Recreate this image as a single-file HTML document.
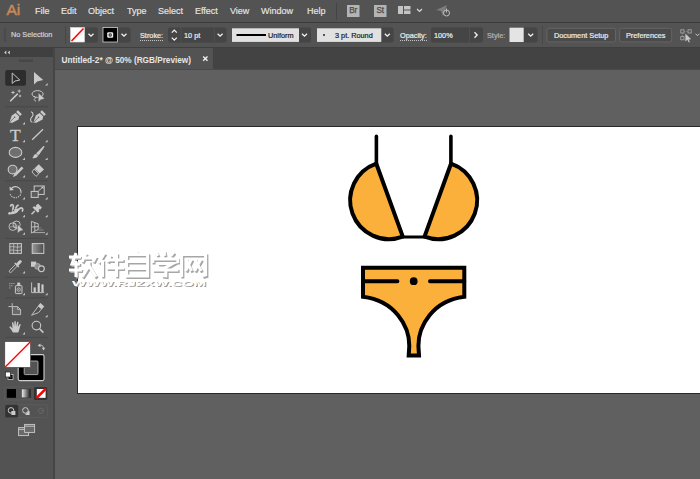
<!DOCTYPE html>
<html><head><meta charset="utf-8">
<style>
*{margin:0;padding:0;box-sizing:border-box}
html,body{width:700px;height:479px;overflow:hidden;background:#606060;font-family:"Liberation Sans",sans-serif;}
#app{position:relative;width:700px;height:479px;overflow:hidden;background:#606060}
.abs{position:absolute}
#menubar{left:0;top:0;width:700px;height:22px;background:#535353}
#menuline{left:0;top:22px;width:700px;height:1px;background:#3c3c3c}
#ctrl{left:0;top:23px;width:700px;height:24px;background:#535353}
#ctrlline{left:0;top:47px;width:700px;height:1px;background:#3f3f3f}
#tabbar{left:54px;top:48px;width:646px;height:22px;background:#434343}
#tab{left:55px;top:48px;width:157.6px;height:21.5px;background:#535353}
#tabline{left:55px;top:69.3px;width:646px;height:1px;background:#4a4a4a}
#tools{left:0;top:48px;width:52.5px;height:431px;background:#535353}
#toolsborder{left:52.5px;top:48px;width:2.5px;height:431px;background:#464646}
#toolshead{left:0;top:48px;width:52.5px;height:8.5px;background:#404040}
.m{position:absolute;top:5px;font-size:9px;color:#e6e6e6;-webkit-text-stroke:0.15px #e6e6e6;white-space:nowrap;line-height:12px}
.c{position:absolute;font-size:7.3px;color:#ececec;-webkit-text-stroke:0.2px #ececec;white-space:nowrap;line-height:10px}
#artboard{left:77px;top:126px;width:640px;height:268px;background:#fff;border:1px solid #2a2a2a}
</style></head><body>
<div id="app">
<div class="abs" id="menubar"></div>
<div class="abs" id="menuline"></div>
<div class="abs" id="ctrl"></div>
<div class="abs" id="ctrlline"></div>
<div class="abs" id="tabbar"></div>
<div class="abs" id="tab"></div>
<div class="abs" id="tabline"></div>
<div class="abs" id="tools"></div>
<div class="abs" id="toolshead"></div>
<div class="abs" id="toolsborder"></div>


<!-- control bar widgets -->
<svg class="abs" style="left:0;top:0" width="700" height="479" viewBox="0 0 700 479">
<!-- separators -->
<rect x="336" y="3" width="1" height="17" fill="#444"/>
<!-- Br St -->
<rect x="347" y="5" width="12.5" height="12" fill="#b4b4b4"/>
<rect x="374" y="5" width="12.5" height="12" fill="#b4b4b4"/>
<!-- layout icon -->
<rect x="398" y="6" width="5" height="8" fill="#c4c4c4"/>
<rect x="404" y="6" width="6.5" height="3.5" fill="#c4c4c4"/>
<rect x="404" y="10.5" width="6.5" height="3.5" fill="#c4c4c4"/>
<path d="M417,9 L419.5,11.5 L422,9" fill="none" stroke="#ddd" stroke-width="1.1"/>
<!-- gpu icon -->
<path d="M436,10 L447,5 L443,16 L441,11 Z" fill="#7d7d7d"/>
<circle cx="446.5" cy="13" r="3" fill="none" stroke="#bdbdbd" stroke-width="1"/>
<rect x="446" y="8.5" width="1" height="4" fill="#bdbdbd"/>
<!-- grip -->
<path d="M5,28.5 V42" stroke="#454545" stroke-width="2.2" stroke-dasharray="1 1"/>
<rect x="65" y="26" width="1" height="18" fill="#474747"/>
<!-- fill swatch -->
<rect x="84" y="27.5" width="14" height="15" rx="2" fill="#454545"/>
<rect x="70.5" y="27.5" width="14" height="14.5" fill="#fff" stroke="#dcdcdc" stroke-width="0.6"/>
<path d="M71.5,41 L83.5,28.5" stroke="#f00" stroke-width="1.6"/>
<path d="M88.5,33.7 L91,36.2 L93.5,33.7" fill="none" stroke="#f2f2f2" stroke-width="1.3"/>
<!-- stroke swatch -->
<rect x="117" y="27.5" width="13.5" height="15" rx="2" fill="#454545"/>
<rect x="103" y="27.5" width="14.5" height="14.5" fill="#000" stroke="#cfcfcf" stroke-width="0.8"/>
<rect x="107.2" y="32.2" width="6" height="5.6" rx="1.2" fill="#efefef"/>
<circle cx="110.2" cy="35" r="1.7" fill="#222"/>
<circle cx="110.2" cy="35" r="0.7" fill="#ddd"/>
<path d="M121.5,33.7 L124,36.2 L126.5,33.7" fill="none" stroke="#f2f2f2" stroke-width="1.3"/>
<!-- stroke weight -->
<rect x="168" y="27.5" width="58.5" height="15" rx="2" fill="#454545"/>
<rect x="180.5" y="27.5" width="0.8" height="15" fill="#535353"/>
<rect x="213.8" y="27.5" width="0.8" height="15" fill="#535353"/>
<path d="M171.8,32.6 L174.3,30.1 L176.8,32.6 M171.8,37.6 L174.3,40.1 L176.8,37.6" fill="none" stroke="#f2f2f2" stroke-width="1.3"/>
<path d="M217.6,33.7 L220.1,36.2 L222.6,33.7" fill="none" stroke="#f2f2f2" stroke-width="1.3"/>
<!-- profile -->
<rect x="298" y="27.5" width="13" height="15" rx="2" fill="#454545"/>
<rect x="232" y="28.3" width="67" height="13.6" fill="#e1e1e1"/>
<rect x="236.5" y="34" width="29.5" height="2" fill="#000"/>
<path d="M302,33.7 L304.5,36.2 L307,33.7" fill="none" stroke="#f2f2f2" stroke-width="1.3"/>
<!-- brush -->
<rect x="380" y="27.5" width="13.6" height="15" rx="2" fill="#454545"/>
<rect x="317" y="28.3" width="64.3" height="13.6" fill="#e1e1e1"/>
<circle cx="324" cy="35" r="0.9" fill="#111"/>
<path d="M384.8,33.7 L387.3,36.2 L389.8,33.7" fill="none" stroke="#f2f2f2" stroke-width="1.3"/>
<!-- opacity -->
<rect x="431" y="27.5" width="52" height="15" rx="2" fill="#454545"/>
<rect x="469" y="27.5" width="0.8" height="15" fill="#535353"/>
<path d="M474.5,32.3 L477.2,35 L474.5,37.7" fill="none" stroke="#f2f2f2" stroke-width="1.3"/>
<!-- style -->
<rect x="523" y="27.5" width="14.5" height="15" rx="2" fill="#454545"/>
<rect x="509.5" y="27.7" width="14.2" height="14.3" fill="#e4e4e4"/>
<path d="M528.2,33.7 L530.7,36.2 L533.2,33.7" fill="none" stroke="#f2f2f2" stroke-width="1.3"/>
<!-- buttons -->
<rect x="547" y="28.3" width="68.5" height="13.6" rx="2" fill="#4b4b4b" stroke="#6b6b6b" stroke-width="0.8"/>
<rect x="619.7" y="28.3" width="52" height="13.6" rx="2" fill="#4b4b4b" stroke="#6b6b6b" stroke-width="0.8"/>
<!-- right icon -->
<rect x="542" y="26" width="1" height="18" fill="#474747"/>
<path d="M682.5,31.5 H689.5 M682.5,31.5 V38" stroke="#999" stroke-width="0.7" stroke-dasharray="1 0.8" fill="none"/>
<rect x="680.8" y="29.8" width="3.2" height="3.2" fill="#535353" stroke="#b0b0b0" stroke-width="0.8"/>
<rect x="688" y="29.8" width="3.2" height="3.2" fill="#535353" stroke="#b0b0b0" stroke-width="0.8"/>
<rect x="680.8" y="36.6" width="3.2" height="3.2" fill="#535353" stroke="#b0b0b0" stroke-width="0.8"/>
<path d="M685.4,33.6 L685.4,41.6 L687.4,39.8 L688.8,42.6 L689.9,42 L688.6,39.4 L691.2,39.2 Z" fill="#c8c8c8"/>
<path d="M695.5,33.7 L697.5,35.7 L699.5,33.7" fill="none" stroke="#ccc" stroke-width="1"/>
<!-- tab close -->
<path d="M203.2,56.5 L207.5,60.8 M207.5,56.5 L203.2,60.8" stroke="#f0f0f0" stroke-width="1.4"/>
<!-- toolbar head chevrons -->
<path d="M6.3,50.4 L4.2,52.5 L6.3,54.6 Z M9.8,50.4 L7.7,52.5 L9.8,54.6 Z" fill="#d0d0d0"/>
<!-- toolbar grip -->
<rect x="19" y="59.5" width="14" height="2.5" fill="#474747"/>
</svg>
<div class="abs" style="left:349.2px;top:6.3px;font-size:8.2px;line-height:10px;color:#4a4a4a;-webkit-text-stroke:0.25px #4a4a4a;letter-spacing:-0.2px">Br</div>
<div class="abs" style="left:376.4px;top:6.3px;font-size:8.2px;line-height:10px;color:#4a4a4a;-webkit-text-stroke:0.25px #4a4a4a;letter-spacing:-0.2px">St</div>


<!-- TOOLS -->
<svg class="abs" style="left:0;top:0" width="56" height="479" viewBox="0 0 56 479">
<g id="tl" fill="none" stroke="#cacaca" stroke-width="1.1">
<!-- selected box -->
<rect x="5.2" y="70" width="20.8" height="15.8" rx="2" fill="#2d2d2d" stroke="none"/>
<!-- selection -->
<path d="M12.2,73 L12.2,83.4 L15,81 L19.8,80 Z" stroke-width="0.95" stroke-linejoin="miter"/>
<!-- direct selection -->
<path d="M34,72 L34,84.6 L37.2,81.6 L43.2,80 Z" fill="#cacaca" stroke="none"/>
<path d="M45.1,85.4 L47.6,82.9 L47.6,85.4 Z" fill="#c4c4c4" stroke="none"/>
<!-- wand -->
<path d="M10.2,101.2 L17.8,93.6" stroke-width="1.5"/>
<path d="M13,90.8 v3.4 M11.3,92.5 h3.4 M19.2,89.6 v3 M17.7,91.1 h3 M20,94.8 v2.4 M18.8,96 h2.4" stroke-width="0.9"/>
<!-- lasso -->
<ellipse cx="37.6" cy="94" rx="5.6" ry="3.4" stroke-width="1"/>
<path d="M33.5,96.5 C35.5,96 36,98 34.5,99 C33.5,99.6 35,101 36,101.3" stroke-width="0.9"/>
<path d="M38.3,92.8 L38.3,102.2 L40.6,100 L44.8,98.6 Z" fill="#cacaca" stroke="#535353" stroke-width="0.5"/>
<!-- sep -->
<path d="M5,106.7 H48" stroke="#494949" stroke-width="1"/>
<!-- pen -->
<g id="pen">
<path d="M9.4,122.4 L11.8,115.4 L15.6,112.9 L19.2,116.5 L18.6,119.4 L12.4,122.8 Z" fill="#cacaca" stroke="none"/>
<path d="M16.2,112 L17.9,110.3 L21.8,114.3 L20.1,116 Z" fill="#cacaca" stroke="none"/>
<path d="M9.8,122 L14.2,117.6" stroke="#535353" stroke-width="0.7"/>
<circle cx="14.6" cy="117.2" r="0.8" fill="#535353" stroke="none"/>
</g>
<use href="#pen" x="24" y="0"/>
<path d="M31,111.8 C33.8,112.6 33.4,115.6 31.6,117.4 C30,119 30.2,121.8 32.4,122.2" stroke-width="1.1"/>
<path d="M22.5,124.6 L25.0,122.1 L25.0,124.6 Z" fill="#c4c4c4" stroke="none"/>
<!-- T -->
<!-- line -->
<path d="M32.2,139.8 L43,129.2" stroke-width="1.3"/>
<path d="M22.5,142.2 L25.0,139.7 L25.0,142.2 Z" fill="#c4c4c4" stroke="none"/>
<path d="M45.1,142.2 L47.6,139.7 L47.6,142.2 Z" fill="#c4c4c4" stroke="none"/>
<!-- ellipse -->
<ellipse cx="15.5" cy="152.4" rx="6.3" ry="5" fill="#6f6f6f" stroke-width="1.1"/>
<path d="M22.5,160.0 L25.0,157.5 L25.0,160.0 Z" fill="#c4c4c4" stroke="none"/>
<!-- brush -->
<path d="M43.6,146.2 L44.2,146.8 L38.4,155 L36.6,153.4 Z" fill="#cacaca" stroke="#cacaca" stroke-width="0.8" stroke-linejoin="round"/>
<path d="M36,154 C34.5,154.2 33.6,155.5 33.4,156.4 C33,157.4 32.4,157.8 32,158 C34.5,158.8 37.6,158 38,155.6 Z" fill="#cacaca" stroke="none"/>
<path d="M45.1,160.0 L47.6,157.5 L47.6,160.0 Z" fill="#c4c4c4" stroke="none"/>
<!-- shaper -->
<circle cx="12.6" cy="169.6" r="4.4" fill="#6f6f6f" stroke-width="1.1"/>
<path d="M22.6,167.4 L15.2,174.8" stroke-width="2.6"/>
<path d="M13,177 L14.2,173.8 L16.2,175.8 Z" fill="#cacaca" stroke="none"/>
<path d="M22.5,177.6 L25.0,175.1 L25.0,177.6 Z" fill="#c4c4c4" stroke="none"/>
<!-- eraser -->
<path d="M38.8,164.2 L44,169.4 L39.6,173.6 L34.4,168.4 Z" fill="#cacaca" stroke="none"/>
<path d="M34,169 L38.8,173.8 L36,176.4 L32,172 Z" stroke-width="0.9"/>
<path d="M45.1,177.6 L47.6,175.1 L47.6,177.6 Z" fill="#c4c4c4" stroke="none"/>
<path d="M5,180.7 H48" stroke="#494949" stroke-width="1"/>
<!-- rotate -->
<path d="M11.2,188.6 A5.6,5.6 0 0 1 21,192.2" stroke-width="1.2"/>
<path d="M21,192.2 A5.6,5.6 0 0 1 10,193.6" stroke-width="1.1" stroke-dasharray="1.3 1"/>
<path d="M9.6,186.4 L9.8,190.6 L14,190 Z" fill="#cacaca" stroke="none"/>
<path d="M22.5,199.4 L25.0,196.9 L25.0,199.4 Z" fill="#c4c4c4" stroke="none"/>
<!-- scale -->
<rect x="34.2" y="186" width="10" height="8.4" stroke-width="1"/>
<rect x="31.2" y="191.4" width="7" height="6" stroke-width="1" fill="#5d5d5d"/>
<path d="M38.4,191 L43,187" stroke-width="0.9"/>
<path d="M43.6,186.4 L43.4,189 L41,187 Z" fill="#cacaca" stroke="none"/>
<path d="M45.1,199.4 L47.6,196.9 L47.6,199.4 Z" fill="#c4c4c4" stroke="none"/>
<!-- warp/width -->
<path d="M10.6,206 C11,204.2 13.2,204.2 13.4,206.4 C13.5,208 12.4,208.6 13,210 M9.6,213.2 C12.6,213.6 15.6,213.4 17,211.6 C18.2,210 19,208.2 21,207.8 C22.8,207.6 23,209.6 22.4,211 M15.8,208 C16.4,206.6 17,205.8 18,205.2" stroke-width="1.7" stroke-linecap="round"/>
<path d="M13.2,210 C15.2,208.4 17.6,208.4 19.6,208.4 L17.4,212 C15.6,213.6 12,213.6 10.6,213 Z" fill="#cacaca" stroke="none"/>
<circle cx="9.4" cy="213.4" r="1.2" fill="#cacaca" stroke="none"/>
<circle cx="13.4" cy="210.4" r="1.1" fill="#535353" stroke="#cacaca" stroke-width="0.7"/>
<path d="M22.5,217.2 L25,214.7 L25,217.2 Z" fill="#c4c4c4" stroke="none"/>
<!-- pin -->
<path d="M35.9,205.3 L38.2,203.8 L41.9,207.5 L40.4,209.4 L38.9,209 L39.3,211.3 L37.8,212.8 L32.5,207.5 L34,206.2 L36.3,207 Z" fill="#cacaca" stroke="none"/>
<path d="M34.8,211 L31.5,214.3" stroke-width="1.5"/>
<path d="M45.1,217.2 L47.6,214.7 L47.6,217.2 Z" fill="#c4c4c4" stroke="none"/>
<!-- shape builder -->
<circle cx="12.8" cy="226.6" r="3.8" stroke-width="0.9"/>
<circle cx="16.6" cy="224.6" r="3.6" stroke-width="0.9"/>
<path d="M10,226.8 H15.6 M14.6,223 L16.4,229.4" stroke-width="0.6"/>
<path d="M17.6,224.4 L17.6,233.2 L19.8,231.2 L23.4,230 Z" fill="#cacaca" stroke="#535353" stroke-width="0.4"/>
<path d="M22.5,234.8 L25.0,232.3 L25.0,234.8 Z" fill="#c4c4c4" stroke="none"/>
<!-- perspective grid -->
<path d="M31.4,221.4 L38.2,223.8 L38.2,229.4 L31.4,233 Z M31.4,227 L38.2,226.6 M34.8,222.6 L34.8,231.2" stroke-width="0.9"/>
<path d="M38.6,227.8 H41.4" stroke="#8a8a8a" stroke-width="0.8"/>
<path d="M37.6,230 H43.6" stroke="#9a9a9a" stroke-width="0.8"/>
<path d="M33,232.6 H45" stroke="#b5b5b5" stroke-width="0.9"/>
<path d="M45.1,234.8 L47.6,232.3 L47.6,234.8 Z" fill="#c4c4c4" stroke="none"/>
<path d="M5,238.4 H48" stroke="#494949" stroke-width="1"/>
<!-- mesh -->
<rect x="9.8" y="243.6" width="11.6" height="9.8" stroke-width="1" fill="#606060"/>
<path d="M13.4,243.6 C14.6,247 12.4,250 13.8,253.4 M17.4,243.6 C18.6,247 16.2,250 17.8,253.4 M9.8,246.8 C13,245.8 17,248.2 21.4,246.6 M9.8,250.2 C13,249.2 17,251.6 21.4,250" stroke-width="0.7"/>
<!-- gradient -->
<rect x="32.2" y="243.6" width="11.6" height="9.8" stroke-width="1" fill="url(#gradtool)"/>
<!-- eyedropper -->
<path d="M15.4,264.6 L9.6,270.4 C8.6,271.6 10,273.2 11.2,272.2 L17,266.4" stroke-width="0.9"/>
<path d="M14.8,263 L18.8,267" stroke-width="1.5"/>
<path d="M17.6,264.2 L20.2,261.6" stroke-width="3" stroke-linecap="round"/>
<path d="M22.5,273.6 L25,271.1 L25,273.6 Z" fill="#c4c4c4" stroke="none"/>
<!-- blend -->
<rect x="31" y="261.6" width="5.2" height="5.2" fill="#cacaca" stroke="none"/>
<circle cx="37.6" cy="266.4" r="2.9" fill="#8a8a8a" stroke="#b8b8b8" stroke-width="0.8"/>
<circle cx="41.4" cy="268.8" r="2.9" fill="#535353" stroke-width="1.1"/>
<path d="M5,277.3 H48" stroke="#494949" stroke-width="1"/>
<!-- symbol sprayer -->
<rect x="15.4" y="285.6" width="6.6" height="8" rx="0.8" stroke-width="1" fill="#5c5c5c"/>
<rect x="17.2" y="282.6" width="3" height="2.4" fill="#cacaca" stroke="none"/>
<circle cx="18.7" cy="289.6" r="1.7" stroke-width="0.8"/>
<circle cx="18.7" cy="289.6" r="0.5" fill="#cacaca" stroke="none"/>
<path d="M9.4,283.6 h1 M11.4,283.6 h1 M13.4,283.6 h1 M9.4,285.8 h1 M11.4,285.8 h1 M9.4,288 h1" stroke-width="1" stroke="#bdbdbd"/>
<path d="M22.5,295.2 L25.0,292.7 L25.0,295.2 Z" fill="#c4c4c4" stroke="none"/>
<!-- graph -->
<path d="M31.6,282.4 V292.6 H44.2" stroke-width="0.9"/>
<rect x="33.6" y="287.4" width="2.2" height="4.6" fill="#cacaca" stroke="none"/>
<rect x="37.6" y="283" width="2.2" height="9" fill="#cacaca" stroke="none"/>
<rect x="41.4" y="284.4" width="2.2" height="7.6" fill="#cacaca" stroke="none"/>
<path d="M45.1,295.2 L47.6,292.7 L47.6,295.2 Z" fill="#c4c4c4" stroke="none"/>
<path d="M5,297.9 H48" stroke="#494949" stroke-width="1"/>
<!-- artboard -->
<path d="M8.4,306.6 H12.4 M12.2,303.2 V306.6" stroke-width="0.9"/>
<path d="M12.4,306.6 H17.6 L20.6,309.6 V314.6 H12.4 Z" stroke-width="0.9" fill="#686868"/>
<path d="M17.6,306.6 V309.6 H20.6" stroke-width="0.7"/>
<!-- slice -->
<path d="M40.4,303.4 L43.8,306.4 L38.6,312.6 L31.6,315.2 Z" stroke-width="0.9" stroke-linejoin="round"/>
<path d="M40.4,303.4 L43.8,306.4 L41.4,309.2 L38,306.2 Z" fill="#cacaca" stroke="none"/>
<path d="M45.1,317.2 L47.6,314.7 L47.6,317.2 Z" fill="#c4c4c4" stroke="none"/>
<!-- hand -->
<path d="M13,332.6 C11.6,330.4 10.6,328.6 9.6,327.6 C9,326.6 10.2,326 11,326.8 L12.6,328.4 L12,323 C11.8,322 13.2,321.8 13.4,322.8 L14.2,326.6 L14.4,321.8 C14.4,320.8 15.8,320.8 15.8,321.8 L16,326.6 L17,322.4 C17.2,321.4 18.6,321.8 18.4,322.8 L17.8,327 L19.4,324.4 C20,323.6 21,324.2 20.6,325 C19.6,327.4 19.2,330.6 18.2,332.6 Z" fill="#cacaca" stroke="none"/>
<path d="M22.5,334.6 L25.0,332.1 L25.0,334.6 Z" fill="#c4c4c4" stroke="none"/>
<!-- zoom -->
<circle cx="36.4" cy="325.6" r="4.3" stroke-width="1.1"/>
<path d="M39.6,328.8 L43.4,332.6" stroke-width="1.6"/>
<path d="M5,337.4 H48" stroke="#494949" stroke-width="1"/>
<!-- stroke swatch -->
<rect x="18.2" y="354.6" width="25.8" height="26" rx="1.6" fill="#000" stroke="#cfcfcf" stroke-width="1.1"/>
<rect x="24.2" y="361" width="13.8" height="13.6" rx="1" fill="#535353" stroke="#c4c4c4" stroke-width="0.8"/>
<!-- fill swatch -->
<rect x="4.8" y="341.6" width="25.8" height="25.8" fill="#fff" stroke="#3a3a3a" stroke-width="0.6"/>
<path d="M5.2,367 L30.2,342" stroke="#f00" stroke-width="1.3"/>
<!-- swap -->
<path d="M39,345.6 C41.6,344.4 43.6,346 43.6,348.6" stroke-width="1"/>
<path d="M37.6,345.8 L40.2,343.4 L40.6,347 Z M41.8,347.8 L45.2,347.8 L43.6,350.6 Z" fill="#cacaca" stroke="none"/>
<!-- default -->
<rect x="8" y="374.4" width="5" height="5" fill="#000" stroke="#ddd" stroke-width="0.7"/>
<rect x="10" y="376.4" width="1.4" height="1.4" fill="#535353" stroke="none"/>
<rect x="5.4" y="372" width="5" height="5" fill="#fff" stroke="#222" stroke-width="0.7"/>
<!-- color / gradient / none -->
<rect x="4.4" y="387" width="43.2" height="13" rx="1.5" stroke="#5d5d5d" stroke-width="0.8"/>
<rect x="34" y="387" width="13.4" height="13" rx="1.5" fill="#333" stroke="none"/>
<rect x="6.8" y="389" width="9.2" height="8.8" fill="#000" stroke="none"/>
<rect x="21.6" y="389" width="9.2" height="8.8" fill="url(#gradsw)" stroke="#3c3c3c" stroke-width="0.5"/>
<rect x="36.8" y="389" width="8.8" height="8.8" fill="#fff" stroke="none"/>
<path d="M37.4,397.2 L45,389.6" stroke="#f00" stroke-width="2.6" stroke-linecap="square"/>
<!-- draw modes -->
<rect x="5.2" y="404.8" width="42.4" height="12.6" rx="1.5" stroke="#5d5d5d" stroke-width="0.8"/>
<rect x="5.2" y="404.8" width="13" height="12.6" rx="1.5" fill="#333" stroke="none"/>
<circle cx="11" cy="410.4" r="2.8" stroke-width="1"/>
<rect x="11.4" y="411" width="4" height="4" fill="#cacaca" stroke="none"/>
<rect x="25.6" y="411" width="4" height="4" fill="#cacaca" stroke="none"/>
<circle cx="25.4" cy="410.4" r="2.8" stroke-width="1" fill="#535353"/>
<circle cx="41" cy="410.8" r="2.6" stroke="#6a6a6a" stroke-width="0.8"/>
<path d="M41,410.8 h2" stroke="#6a6a6a" stroke-width="0.8"/>
<!-- screen mode -->
<rect x="18.6" y="427.6" width="10" height="8" fill="#6a6a6a" stroke-width="0.9"/>
<path d="M18.6,429.4 h10" stroke-width="0.9"/>
<rect x="24.6" y="424.4" width="10" height="8" fill="#6a6a6a" stroke-width="0.9"/>
<path d="M24.6,426.2 h10" stroke-width="0.9"/>
</g>
<defs>
<linearGradient id="gradtool" x1="0" y1="0" x2="1" y2="0"><stop offset="0" stop-color="#9a9a9a"/><stop offset="1" stop-color="#4a4a4a"/></linearGradient>
<linearGradient id="gradsw" x1="0" y1="0" x2="1" y2="0"><stop offset="0" stop-color="#f2f2f2"/><stop offset="1" stop-color="#111"/></linearGradient>
</defs>
</svg>
<div class="abs" style="left:10px;top:125.6px;font-family:'Liberation Serif',serif;font-size:17.5px;line-height:18px;color:#cacaca;-webkit-text-stroke:0.3px #cacaca">T</div>

<!-- menu -->
<div class="abs" style="left:6.5px;top:0.4px;font-size:15.5px;line-height:20px;color:#c9895a;-webkit-text-stroke:0.5px #c9895a;letter-spacing:-0.2px">Ai</div>
<div class="m" style="left:35px">File</div>
<div class="m" style="left:61px">Edit</div>
<div class="m" style="left:88px">Object</div>
<div class="m" style="left:127px">Type</div>
<div class="m" style="left:158px">Select</div>
<div class="m" style="left:195px">Effect</div>
<div class="m" style="left:230px">View</div>
<div class="m" style="left:261px">Window</div>
<div class="m" style="left:307px">Help</div>

<!-- control bar texts -->
<div class="c" style="left:11px;top:30.1px;color:#d4d4d4;-webkit-text-stroke:0.2px #d4d4d4">No Selection</div>
<div class="c" style="left:140px;top:32.1px;border-bottom:1px dotted #c4c4c4;line-height:7.5px">Stroke:</div>
<div class="c" style="left:184px;top:30.8px">10 pt</div>
<div class="c" style="left:268px;top:30.8px;color:#1a1a1a;-webkit-text-stroke:0.2px #1a1a1a">Uniform</div>
<div class="c" style="left:335px;top:30.8px;color:#1a1a1a;-webkit-text-stroke:0.2px #1a1a1a">3 pt. Round</div>
<div class="c" style="left:400px;top:32.1px;border-bottom:1px dotted #c4c4c4;line-height:7.5px">Opacity:</div>
<div class="c" style="left:434px;top:30.8px">100%</div>
<div class="c" style="left:487px;top:30.8px;color:#b4b4b4;-webkit-text-stroke:0.2px #b4b4b4">Style:</div>
<div class="c" style="left:554px;top:30.8px">Document Setup</div>
<div class="c" style="left:626px;top:30.8px">Preferences</div>

<!-- tab -->
<div class="abs" style="left:61.5px;top:54.6px;font-size:8.22px;font-weight:bold;color:#e6e6e6;line-height:11px;white-space:nowrap">Untitled-2* @ 50% (RGB/Preview)</div>

<div class="abs" id="artboard"></div>

<svg class="abs" style="left:0;top:0" width="700" height="479" viewBox="0 0 700 479">
<!-- bikini -->
<g fill="#fbb03b" stroke="#000" stroke-width="4" stroke-linejoin="round" stroke-linecap="round">
<path d="M376.4,136.4 L376.4,163.53" stroke-width="3.6"/>
<path d="M376.23,163.53 L402.79,236.65 A38.9,38.9 0 1 1 376.23,163.53 Z"/>
<path d="M450.9,136.4 L450.9,163.53" stroke-width="3.6"/>
<path d="M451.07,163.53 L424.51,236.65 A38.9,38.9 0 1 0 451.07,163.53 Z"/>
<path d="M402.7,237 L424.6,237" fill="none" stroke-width="3.2"/>
</g>
<g fill="#fbb03b" stroke="#000" stroke-width="4" stroke-linejoin="miter">
<path d="M363,267.8 L464.3,267.8 L464.3,296.8 C433,300.5 418.2,326 418.4,346 L419,355.4 L408.7,355.4 L409.3,346 C409.5,326 394.5,300.5 363,296.8 Z"/>
<path d="M363,281.2 L397.4,281.2 M430,281.2 L464.3,281.2" fill="none" stroke-linecap="round"/>
<circle cx="413.7" cy="281.2" r="1.9" fill="#000"/>
</g>
</svg>

<!-- watermark -->
<svg class="abs" style="left:0;top:0" width="700" height="479" viewBox="0 0 700 479">
<defs><filter id="wsh" x="-5%" y="-20%" width="110%" height="140%"><feGaussianBlur stdDeviation="0.5"/></filter></defs>
<g fill="none" stroke="#a6a6a6" stroke-width="3" transform="translate(1.3,1.7)" filter="url(#wsh)">
<path transform="translate(69,252.9)" d="M0,4 H12 M7,0 L3,11 H11 M0,17 H13 M7,8 V24 M17,0 L13,9 M16,5 H26 L24,9 M20,8 V13 L13,24 M20,13 L27,24"/>
<path transform="translate(98.5,252.9)" d="M6,0 L0,10 M4,7 V24 M12,2 L9,9 M11,7 H25 M8,15 H26 M18,0 V24"/>
<path transform="translate(126.6,252.9)" d="M11,-2 L9,1 M0,1.5 H21 V23 H0 Z M0,8.5 H21 M0,15.5 H21"/>
<path transform="translate(152.8,252.9)" d="M3,-1 L5,3 M11,-2 L12,3 M21,-1 L18,3 M0,10 V6 H25 V10 M5,10.5 H20 L13,14.5 V23 L9,22.5 M0,17 H25.5"/>
<path transform="translate(181.6,252.9)" d="M0,24 V1.5 H24 V22 L20.5,23 M4,6 L10,18 M10,6 L4,18 M13,6 L19.5,18 M19.5,6 L13,18"/>
</g>
<g fill="none" stroke="#fff" stroke-width="3">
<path transform="translate(69,252.9)" d="M0,4 H12 M7,0 L3,11 H11 M0,17 H13 M7,8 V24 M17,0 L13,9 M16,5 H26 L24,9 M20,8 V13 L13,24 M20,13 L27,24"/>
<path transform="translate(98.5,252.9)" d="M6,0 L0,10 M4,7 V24 M12,2 L9,9 M11,7 H25 M8,15 H26 M18,0 V24"/>
<path transform="translate(126.6,252.9)" d="M11,-2 L9,1 M0,1.5 H21 V23 H0 Z M0,8.5 H21 M0,15.5 H21"/>
<path transform="translate(152.8,252.9)" d="M3,-1 L5,3 M11,-2 L12,3 M21,-1 L18,3 M0,10 V6 H25 V10 M5,10.5 H20 L13,14.5 V23 L9,22.5 M0,17 H25.5"/>
<path transform="translate(181.6,252.9)" d="M0,24 V1.5 H24 V22 L20.5,23 M4,6 L10,18 M10,6 L4,18 M13,6 L19.5,18 M19.5,6 L13,18"/>
</g>
<text x="73.2" y="287.2" font-family="Liberation Sans, sans-serif" font-weight="bold" font-size="8" fill="#9c9c9c" textLength="134" lengthAdjust="spacingAndGlyphs" filter="url(#wsh)">WWW.RJZXW.COM</text>
<text x="72" y="286" font-family="Liberation Sans, sans-serif" font-weight="bold" font-size="8" fill="#fff" textLength="134" lengthAdjust="spacingAndGlyphs">WWW.RJZXW.COM</text>
</svg>
</div>
</body></html>
